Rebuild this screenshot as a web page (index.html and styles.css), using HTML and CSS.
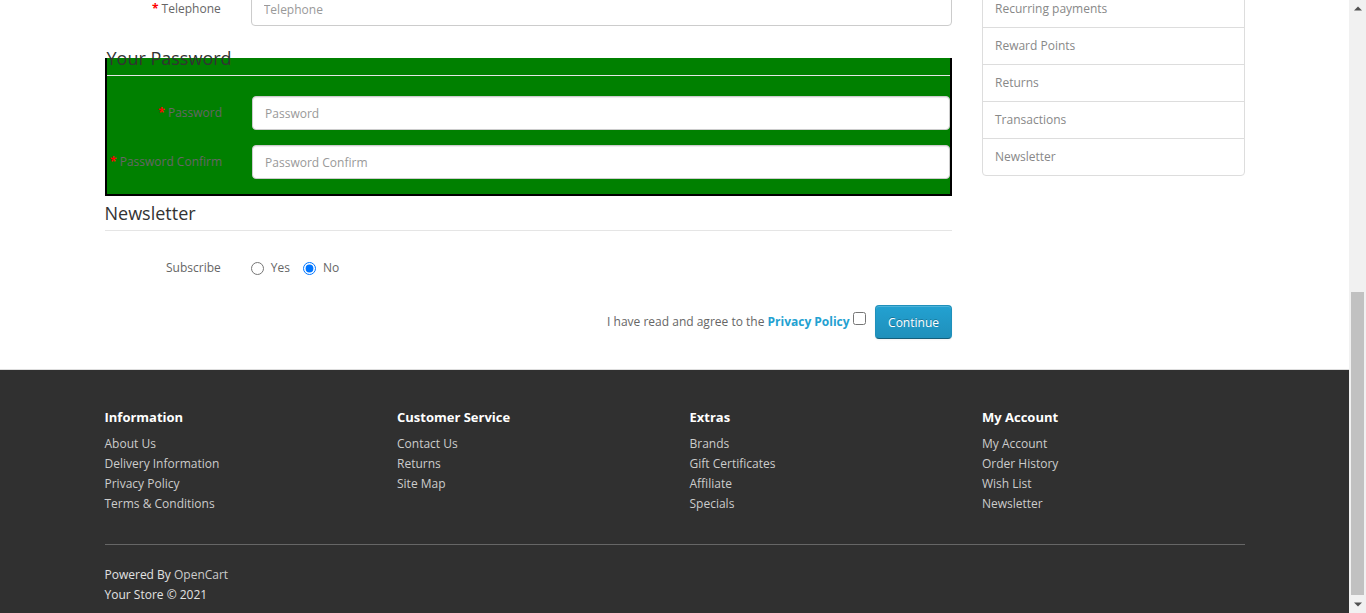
FILE: index.html
```html
<!DOCTYPE html>
<html lang="en">
<head>
<meta charset="utf-8">
<title>Register Account</title>
<link rel="stylesheet" href="styles.css">
</head>
<body>
<div class="page">
<nav class="topbar">
  <div class="container topbar-inner">
    <span class="topbar-item">$ Currency</span>
    <span class="topbar-links">
      <a href="#">123456789</a>
      <a href="#">My Account</a>
      <a href="#">Wish List (0)</a>
      <a href="#">Shopping Cart</a>
      <a href="#">Checkout</a>
    </span>
  </div>
</nav>
<header class="site-header">
  <div class="container header-inner">
    <div class="logo">Your Store</div>
    <div class="search"><input class="search-input" type="text" placeholder="Search"></div>
    <div class="cart">0 item(s) - $0.00</div>
  </div>
</header>
<div class="container">
  <nav class="menu">
    <a href="#">Desktops</a>
    <a href="#">Laptops &amp; Notebooks</a>
    <a href="#">Components</a>
    <a href="#">Tablets</a>
    <a href="#">Software</a>
    <a href="#">Phones &amp; PDAs</a>
    <a href="#">Cameras</a>
    <a href="#">MP3 Players</a>
  </nav>
</div>
<div class="container">
  <ul class="breadcrumb">
    <li><a href="#">Home</a></li>
    <li><a href="#">Account</a></li>
    <li><a href="#">Register</a></li>
  </ul>
  <div class="row">
    <div class="content">
      <h1 class="page-title">Register Account</h1>
      <p class="intro">If you already have an account with us, please login at the <a href="#">login page</a>.</p>
      <form class="form-horizontal">
        <fieldset class="fs">
          <legend>Your Personal Details</legend>
          <div class="form-group required">
            <label class="control-label">First Name</label>
            <div class="field"><input class="form-control" type="text" placeholder="First Name"></div>
          </div>
          <div class="form-group required">
            <label class="control-label">Last Name</label>
            <div class="field"><input class="form-control" type="text" placeholder="Last Name"></div>
          </div>
          <div class="form-group required">
            <label class="control-label">E-Mail</label>
            <div class="field"><input class="form-control" type="email" placeholder="E-Mail"></div>
          </div>
          <div class="form-group required">
            <label class="control-label">Telephone</label>
            <div class="field"><input class="form-control" type="tel" placeholder="Telephone"></div>
          </div>
        </fieldset>
        <fieldset class="fs fs-green">
          <legend>Your Password</legend>
          <div class="form-group required">
            <label class="control-label">Password</label>
            <div class="field"><input class="form-control" type="password" placeholder="Password"></div>
          </div>
          <div class="form-group required">
            <label class="control-label">Password Confirm</label>
            <div class="field"><input class="form-control" type="password" placeholder="Password Confirm"></div>
          </div>
        </fieldset>
        <fieldset class="fs">
          <legend>Newsletter</legend>
          <div class="form-group">
            <label class="control-label">Subscribe</label>
            <div class="field radios">
              <label class="radio-inline"><input type="radio" name="newsletter" value="1">Yes</label>
              <label class="radio-inline"><input type="radio" name="newsletter" value="0" checked>No</label>
            </div>
          </div>
        </fieldset>
        <div class="buttons">I have read and agree to the <a class="agree" href="#"><b>Privacy Policy</b></a> <input class="agree-box" type="checkbox" name="agree" value="1"> &nbsp; <button class="btn-primary" type="button">Continue</button></div>
      </form>
    </div>
    <aside class="column-right">
      <div class="list-group">
        <a href="#">Login</a>
        <a href="#">Register</a>
        <a href="#">Forgotten Password</a>
        <a href="#">My Account</a>
        <a href="#">Address Book</a>
        <a href="#">Wish List</a>
        <a href="#">Order History</a>
        <a href="#">Downloads</a>
        <a href="#">Recurring payments</a>
        <a href="#">Reward Points</a>
        <a href="#">Returns</a>
        <a href="#">Transactions</a>
        <a href="#">Newsletter</a>
      </div>
    </aside>
  </div>
</div>
<footer class="footer">
  <div class="container">
    <div class="footer-row">
      <div class="footer-col">
        <h5>Information</h5>
        <ul>
          <li><a href="#">About Us</a></li>
          <li><a href="#">Delivery Information</a></li>
          <li><a href="#">Privacy Policy</a></li>
          <li><a href="#">Terms &amp; Conditions</a></li>
        </ul>
      </div>
      <div class="footer-col">
        <h5>Customer Service</h5>
        <ul>
          <li><a href="#">Contact Us</a></li>
          <li><a href="#">Returns</a></li>
          <li><a href="#">Site Map</a></li>
        </ul>
      </div>
      <div class="footer-col">
        <h5>Extras</h5>
        <ul>
          <li><a href="#">Brands</a></li>
          <li><a href="#">Gift Certificates</a></li>
          <li><a href="#">Affiliate</a></li>
          <li><a href="#">Specials</a></li>
        </ul>
      </div>
      <div class="footer-col">
        <h5>My Account</h5>
        <ul>
          <li><a href="#">My Account</a></li>
          <li><a href="#">Order History</a></li>
          <li><a href="#">Wish List</a></li>
          <li><a href="#">Newsletter</a></li>
        </ul>
      </div>
    </div>
    <hr class="footer-hr">
    <p class="powered">Powered By <a href="#">OpenCart</a><br>Your Store &copy; 2021</p>
  </div>
</footer>
</div>
<div class="scrollbar" aria-hidden="true">
  <div class="sb-button">
    <svg width="8" height="5" viewBox="0 0 8 5"><path d="M0 4.5L4 0.5L8 4.5z" fill="#505050"/></svg>
  </div>
  <div class="sb-track"><div class="sb-thumb"></div></div>
  <div class="sb-button">
    <svg width="8" height="5" viewBox="0 0 8 5"><path d="M0 0.5L4 4.5L8 0.5z" fill="#505050"/></svg>
  </div>
</div>
<script src="script.js"></script>
</body>
</html>
```
FILE: styles.css
```css
* {
  box-sizing: border-box;
}
html {
  scrollbar-width: none;
}
body {
  margin: 0;
  font-family: "Open Sans", "Liberation Sans", sans-serif;
  font-size: 12px;
  line-height: 20px;
  color: #666;
  background: #fff;
}
.page {
  width: calc(100% - 17px);
}
a {
  color: #23a1d1;
  text-decoration: none;
}
.container {
  width: 1170px;
  margin: 0 auto;
  padding: 0 15px;
}

/* drawn scrollbar at the window edge */
.scrollbar {
  position: fixed;
  top: 0;
  right: 0;
  width: 17px;
  height: 100vh;
  display: flex;
  flex-direction: column;
  background: #f1f1f1;
}
.sb-button {
  height: 17px;
  flex: none;
  display: flex;
  align-items: center;
  justify-content: center;
}
.sb-track {
  flex: 1;
  display: flex;
  flex-direction: column;
  justify-content: flex-end;
  padding: 0 2px 1px;
}
.sb-thumb {
  height: 303px;
  background: #c1c1c1;
}

/* header (above the fold) */
.topbar {
  height: 40px;
  margin-bottom: 20px;
  background: #eee;
  border-bottom: 1px solid #e2e2e2;
}
.topbar-inner {
  display: flex;
  justify-content: space-between;
  align-items: center;
  height: 39px;
  color: #888;
}
.topbar-links {
  display: flex;
  gap: 14px;
}
.topbar-links a {
  color: #888;
}
.site-header {
  height: 72px;
}
.header-inner {
  display: flex;
  align-items: flex-start;
  gap: 30px;
}
.logo {
  width: 360px;
  font-size: 33px;
  line-height: 40px;
  color: #23a1d1;
}
.search {
  flex: 1;
}
.search-input {
  width: 100%;
  height: 40px;
  border: 1px solid #ccc;
  border-radius: 4px;
  padding: 0 12px;
  font: inherit;
}
.cart {
  width: 260px;
  height: 40px;
  line-height: 40px;
  text-align: center;
  color: #fff;
  background: #363636;
  border-radius: 4px;
}
.menu {
  display: flex;
  height: 41px;
  margin-bottom: 20px;
  padding: 0 10px;
  background: linear-gradient(#23a1d1, #1f90bb);
  border: 1px solid #1f90bb;
  border-bottom-color: #145e7a;
  border-radius: 4px;
}
.menu a {
  color: #fff;
  font-size: 13px;
  font-weight: bold;
  line-height: 39px;
  padding: 0 15px;
}
.breadcrumb {
  display: flex;
  gap: 20px;
  height: 40px;
  margin: 0 0 20px;
  padding: 9px 10px;
  list-style: none;
  border: 1px solid #ddd;
  border-radius: 4px;
  background: #f5f5f5;
}

/* main layout */
.row {
  display: flex;
  margin: 0 -15px;
}
.content {
  width: 75%;
  padding: 0 15px;
}
.column-right {
  width: 25%;
  padding: 0 15px;
}
.page-title {
  margin: 20px 0 10px;
  font-size: 33px;
  line-height: 36px;
  font-weight: 500;
  color: #444;
}
.intro {
  margin: 0 0 10px;
}
.form-horizontal {
  margin: 0;
}
.fs {
  min-width: 0;
  margin: 0;
  padding: 0;
  border: 0;
}
.fs legend {
  display: block;
  width: 100%;
  margin-bottom: 20px;
  padding: 7px 0;
  font-size: 18px;
  line-height: 20px;
  color: #333;
  border-bottom: 1px solid #e5e5e5;
}
.fs-green {
  background: #008000;
  border: 2px solid #000;
}
.form-group {
  display: flex;
  margin: 0 -15px 15px;
}
.control-label {
  width: 16.666667%;
  padding: 7px 15px 0;
  text-align: right;
  font-weight: normal;
  white-space: nowrap;
}
.required .control-label::before {
  content: "* ";
  color: #f00;
  font-weight: bold;
}
.field {
  width: 83.333333%;
  padding: 0 15px;
}
.form-control {
  display: block;
  width: 100%;
  height: 34px;
  padding: 6px 12px;
  font-family: inherit;
  font-size: 12px;
  line-height: 1.42857;
  color: #555;
  background: #fff;
  border: 1px solid #ccc;
  border-radius: 4px;
  box-shadow: inset 0 1px 1px rgba(0, 0, 0, 0.075);
}
.form-control::placeholder {
  color: #999;
}
.radios {
  display: flex;
  gap: 13px;
  min-height: 27px;
}
.radio-inline {
  display: inline-flex;
  align-items: center;
  gap: 7px;
  padding-top: 7px;
  height: 27px;
  cursor: pointer;
}
.radio-inline input {
  width: 13px;
  height: 13px;
  margin: 0;
}
.buttons {
  margin: 12px 0;
  text-align: right;
  line-height: 34px;
}
.agree {
  color: #23a1d1;
}
.agree-box {
  width: 13px;
  height: 13px;
  margin: 4px 0 0;
  vertical-align: baseline;
  position: relative;
  top: -1px;
}
.btn-primary {
  display: inline-block;
  vertical-align: top;
  height: 34px;
  padding: 7.5px 12px;
  font-family: inherit;
  font-size: 12px;
  line-height: 17px;
  color: #fff;
  text-shadow: 0 -1px 0 rgba(0, 0, 0, 0.25);
  background: linear-gradient(#23a1d1, #1f90bb);
  border: 1px solid;
  border-color: #1f90bb #1f90bb #145e7a;
  border-radius: 4px;
  box-shadow: inset 0 1px 0 rgba(255, 255, 255, 0.2), 0 1px 2px rgba(0, 0, 0, 0.05);
  cursor: pointer;
}
.list-group {
  margin-bottom: 20px;
}
.list-group a {
  display: block;
  padding: 8px 12px;
  margin-bottom: -1px;
  color: #888;
  border: 1px solid #ddd;
  background: #fff;
}
.list-group a:first-child {
  border-radius: 4px 4px 0 0;
}
.list-group a:last-child {
  border-radius: 0 0 4px 4px;
}

/* footer */
.footer {
  margin-top: 18px;
  padding: 30px 0 8px;
  background: #303030;
  border-top: 1px solid #ddd;
  color: #e2e2e2;
}
.footer a {
  color: #ccc;
}
.footer-row {
  display: flex;
  margin: 0 -15px;
}
.footer-col {
  width: 25%;
  padding: 0 15px;
}
.footer h5 {
  margin: 10px 0;
  font-size: 13px;
  line-height: 14px;
  font-weight: bold;
  color: #fff;
}
.footer ul {
  margin: 0 0 10px;
  padding: 0;
  list-style: none;
}
.footer-hr {
  margin: 20px 0;
  height: 0;
  border: 0;
  border-top: 1px solid #666;
}
.powered {
  margin: 0;
}
```
FILE: script.js
```js
function scrollToBottom() {
  window.scrollTo(0, document.documentElement.scrollHeight);
}
scrollToBottom();
window.addEventListener('load', scrollToBottom);
```
